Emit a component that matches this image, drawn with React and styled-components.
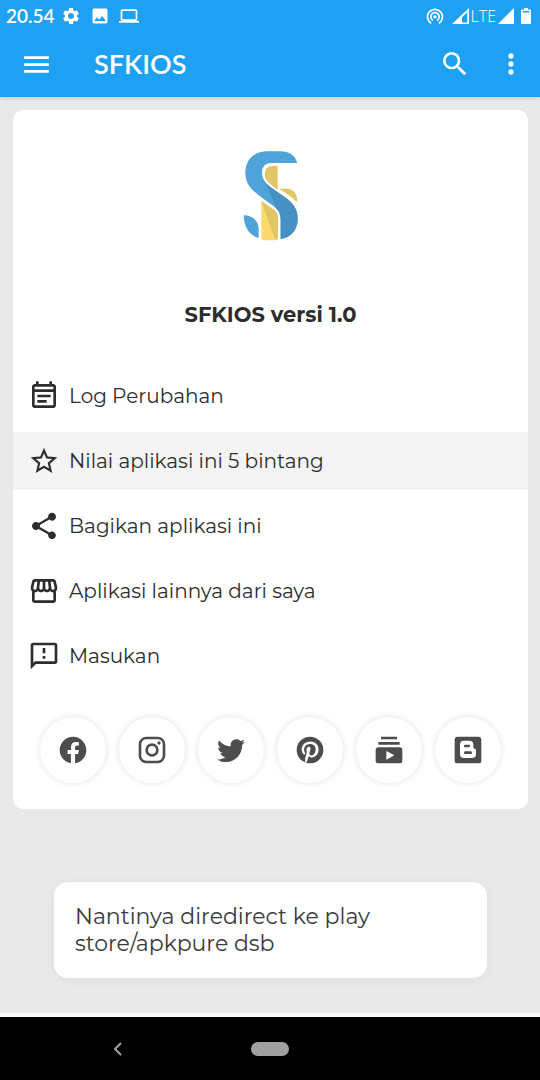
import React from "react";
import styled, { createGlobalStyle } from "styled-components";
import {
  MdSettings,
  MdImage,
  MdLaptop,
  MdWifiTethering,
  MdMenu,
  MdSearch,
  MdMoreVert,
  MdOutlineEventNote,
  MdStarBorder,
  MdShare,
  MdOutlineStorefront,
} from "react-icons/md";

const GlobalStyle = createGlobalStyle`
  * { box-sizing: border-box; }
  body {
    margin: 0;
    background: #e9e9e9;
    color: #2d2d2d;
    font-family: Montserrat, Inter, "Open Sans", sans-serif;
  }
  button { font: inherit; color: inherit; }
`;

const Screen = styled.div`
  display: flex;
  flex-direction: column;
  min-height: 100vh;
`;

const Header = styled.header`
  background: #1fa1f3;
  color: #fff;
  box-shadow: 0 1px 4px rgba(0, 0, 0, 0.16);
`;

const StatusBar = styled.div`
  display: flex;
  align-items: center;
  justify-content: space-between;
  height: 32px;
  padding: 0 9px 0 6px;
`;

const StatusGroup = styled.div`
  display: flex;
  align-items: center;
  gap: ${(p) => p.$gap}px;
  svg { display: block; }
`;

const Clock = styled.time`
  font: 600 19px/24px Lato, sans-serif;
`;

const Network = styled.span`
  display: flex;
  align-items: center;
  gap: 2px;
  font: 300 16px/20px "Open Sans", sans-serif;
`;

const AppBar = styled.div`
  display: flex;
  align-items: center;
  height: 64px;
  margin-bottom: 1px;
  padding: 0 13px 0 20px;
`;

const BarButton = styled.button`
  display: flex;
  align-items: center;
  justify-content: center;
  width: ${(p) => p.$width}px;
  height: 40px;
  padding: 0;
  border: 0;
  background: none;
`;

const Title = styled.h1`
  flex: 1;
  margin: 0 0 0 41px;
  font: 600 27px/32px Lato, sans-serif;
`;

const Actions = styled.div`
  display: flex;
  gap: 24px;
`;

const Main = styled.main`
  flex: 1;
  display: flex;
  flex-direction: column;
  padding: 13px 12px 35px 13px;
  border-bottom: 4px solid #fafafa;
`;

const Card = styled.section`
  display: flex;
  flex-direction: column;
  padding: 41px 0 26px;
  border-radius: 10px;
  background: #fff;
`;

const Brand = styled.div`
  display: flex;
  flex-direction: column;
  align-items: center;
  gap: 60px;
`;

const Version = styled.h2`
  margin: 0;
  font-size: 21px;
  line-height: 28px;
  font-weight: 700;
`;

const Menu = styled.ul`
  display: flex;
  flex-direction: column;
  gap: 7px;
  margin: 38px 0 32px;
  padding: 0;
  list-style: none;
`;

const MenuButton = styled.button`
  display: flex;
  align-items: center;
  gap: 9px;
  width: 100%;
  height: 58px;
  padding: 0 15px;
  border: 0;
  background: ${(p) => (p.$active ? "#f4f4f4" : "none")};
  font-size: 20px;
  line-height: 28px;
  text-align: left;
`;

const Socials = styled.nav`
  display: flex;
  justify-content: space-between;
  padding: 0 27px;
`;

const SocialLink = styled.a`
  display: flex;
  align-items: center;
  justify-content: center;
  width: 66px;
  height: 66px;
  border-radius: 50%;
  color: #4d4d4d;
  background: #fff;
  box-shadow: 0 0 6px rgba(0, 0, 0, 0.12);
`;

const Toast = styled.div`
  margin: auto 41px 0;
  padding: 21px;
  border-radius: 14px;
  background: #fff;
  box-shadow: 0 2px 12px rgba(0, 0, 0, 0.05);
  color: #3a3a3a;
  font-size: 22px;
  line-height: 27px;
`;

const ToastText = styled.p`
  max-width: 330px;
  margin: 0;
`;

const SystemNav = styled.footer`
  display: grid;
  grid-template-columns: 1fr auto 1fr;
  align-items: center;
  height: 63px;
  background: #000;
  color: #a2a2a2;
`;

const BackButton = styled.button`
  display: flex;
  justify-self: center;
  margin-right: 16px;
  padding: 8px;
  border: 0;
  background: none;
`;

const HomeButton = styled.button`
  width: 38px;
  height: 14px;
  padding: 0;
  border: 0;
  border-radius: 7px;
  background: #a0a0a0;
`;

const Glyph = ({ d, size = 32 }) => (
  <svg width={size} height={size} viewBox="0 0 24 24" fill="currentColor" aria-hidden="true">
    <path d={d} />
  </svg>
);

const FEEDBACK =
  "M13,10H11V6H13V10M13,12H11V14H13V12M22,4V16A2,2 0 0,1 20,18H6L2,22V4A2,2 0 0,1 4,2H20A2,2 0 0,1 22,4M20,4H4V17.2L5.2,16H20V4Z";

const SOCIALS = [
  {
    name: "Facebook",
    d: "M12 2.04C6.5 2.04 2 6.53 2 12.06C2 17.06 5.66 21.21 10.44 21.96V14.96H7.9V12.06H10.44V9.85C10.44 7.34 11.93 5.96 14.22 5.96C15.31 5.96 16.45 6.15 16.45 6.15V8.62H15.19C13.95 8.62 13.56 9.39 13.56 10.18V12.06H16.34L15.89 14.96H13.56V21.96A10 10 0 0 0 22 12.06C22 6.53 17.5 2.04 12 2.04Z",
  },
  {
    name: "Instagram",
    d: "M7.8,2H16.2C19.4,2 22,4.6 22,7.8V16.2A5.8,5.8 0 0,1 16.2,22H7.8C4.6,22 2,19.4 2,16.2V7.8A5.8,5.8 0 0,1 7.8,2M7.6,4A3.6,3.6 0 0,0 4,7.6V16.4C4,18.39 5.61,20 7.6,20H16.4A3.6,3.6 0 0,0 20,16.4V7.6C20,5.61 18.39,4 16.4,4H7.6M17.25,5.5A1.25,1.25 0 0,1 18.5,6.75A1.25,1.25 0 0,1 17.25,8A1.25,1.25 0 0,1 16,6.75A1.25,1.25 0 0,1 17.25,5.5M12,7A5,5 0 0,1 17,12A5,5 0 0,1 12,17A5,5 0 0,1 7,12A5,5 0 0,1 12,7M12,9A3,3 0 0,0 9,12A3,3 0 0,0 12,15A3,3 0 0,0 15,12A3,3 0 0,0 12,9Z",
  },
  {
    name: "Twitter",
    d: "M22.46,6C21.69,6.35 20.86,6.58 20,6.69C20.88,6.16 21.56,5.32 21.88,4.31C21.05,4.81 20.13,5.16 19.16,5.36C18.37,4.5 17.26,4 16,4C13.65,4 11.73,5.92 11.73,8.29C11.73,8.63 11.77,8.96 11.84,9.27C8.28,9.09 5.11,7.38 3,4.79C2.63,5.42 2.42,6.16 2.42,6.94C2.42,8.43 3.17,9.75 4.33,10.5C3.62,10.5 2.96,10.3 2.38,10V10.03C2.38,12.11 3.86,13.85 5.82,14.24C5.46,14.34 5.08,14.39 4.69,14.39C4.42,14.39 4.15,14.36 3.89,14.31C4.43,16 6,17.26 7.89,17.29C6.43,18.45 4.58,19.13 2.56,19.13C2.22,19.13 1.88,19.11 1.54,19.07C3.44,20.29 5.7,21 8.12,21C16,21 20.33,14.46 20.33,8.79C20.33,8.6 20.33,8.42 20.32,8.23C21.16,7.63 21.88,6.87 22.46,6Z",
  },
  {
    name: "Pinterest",
    d: "M9.04,21.54C10,21.83 10.97,22 12,22A10,10 0 0,0 22,12A10,10 0 0,0 12,2A10,10 0 0,0 2,12C2,16.25 4.67,19.9 8.44,21.34C8.35,20.56 8.26,19.27 8.44,18.38L9.59,13.44C9.59,13.44 9.3,12.86 9.3,11.94C9.3,10.56 10.16,9.53 11.14,9.53C12,9.53 12.4,10.16 12.4,10.97C12.4,11.83 11.83,13.06 11.54,14.24C11.37,15.22 12.06,16.08 13.06,16.08C14.84,16.08 16.22,14.18 16.22,11.5C16.22,9.1 14.5,7.46 12.03,7.46C9.21,7.46 7.55,9.56 7.55,11.77C7.55,12.63 7.83,13.5 8.29,14.07C8.38,14.13 8.38,14.21 8.35,14.36L8.06,15.45C8.06,15.62 7.95,15.68 7.78,15.56C6.5,15 5.76,13.18 5.76,11.71C5.76,8.55 8,5.68 12.32,5.68C15.76,5.68 18.44,8.15 18.44,11.43C18.44,14.87 16.31,17.63 13.26,17.63C12.29,17.63 11.34,17.11 11,16.5L10.33,18.87C10.1,19.73 9.47,20.88 9.04,21.5V21.54Z",
  },
  {
    name: "YouTube",
    d: "M20,8H4V6H20V8M18,2H6V4H18V2M22,12V20A2,2 0 0,1 20,22H4A2,2 0 0,1 2,20V12A2,2 0 0,1 4,10H20A2,2 0 0,1 22,12M16,16L10,12.73V19.26L16,16Z",
  },
  {
    name: "Blogger",
    d: "M14,13H9.95A1,1 0 0,0 8.95,14A1,1 0 0,0 9.95,15H14A1,1 0 0,0 15,14A1,1 0 0,0 14,13M9.95,10H12.55A1,1 0 0,0 13.55,9A1,1 0 0,0 12.55,8H9.95A1,1 0 0,0 8.95,9A1,1 0 0,0 9.95,10M16,9V10A1,1 0 0,0 17,11A1,1 0 0,1 18,12V15A3,3 0 0,1 15,18H9A3,3 0 0,1 6,15V8A3,3 0 0,1 9,5H13A3,3 0 0,1 16,8M20,2H4C2.89,2 2,2.89 2,4V20A2,2 0 0,0 4,22H20A2,2 0 0,0 22,20V4C22,2.89 21.1,2 20,2Z",
  },
];

const MENU = [
  { label: "Log Perubahan", icon: <MdOutlineEventNote size={32} /> },
  { label: "Nilai aplikasi ini 5 bintang", icon: <MdStarBorder size={32} />, active: true },
  { label: "Bagikan aplikasi ini", icon: <MdShare size={32} /> },
  { label: "Aplikasi lainnya dari saya", icon: <MdOutlineStorefront size={32} /> },
  { label: "Masukan", icon: <Glyph d={FEEDBACK} /> },
];

const Logo = () => (
  <svg width="56" height="90" viewBox="99 62 168 270" role="img" aria-label="SFKIOS">
    <path fill="#e2c567" d="M165 140C163 115 172 106 190 106H203V178C180 162 168 152 165 140Z" />
    <path fill="#e2c567" d="M206 175H230C250 175 262 190 262 213H258C245 199 225 186 206 175Z" />
    <path fill="#fbd96c" d="M154 212L190 237C200 244 204 251 204 264V320Q204 330 194 330H164Q154 330 154 320Z" />
    <path fill="#e2c567" d="M154 212L190 237C200 244 204 251 204 264V320Q204 328 196 330Z" />
    <path
      fill="#4fa3d8"
      d="M262 98C255 75 238 63 212 63H172C130 63 106 90 106 128C106 165 130 183 160 205L190 227C208 241 212 253 212 270V326C240 322 263 302 263 266C263 235 250 220 225 201L185 173C165 158 156 145 156 125C156 108 168 98 185 98Z"
    />
    <path
      fill="#4690c3"
      d="M165 156L198 232C209 243 212 255 212 270V326C240 322 263 302 263 266C263 235 250 220 225 201L185 173C176 167 170 162 165 156Z"
    />
    <path fill="#4fa3d8" d="M101 255C126 255 146 270 146 296V323C118 316 102 290 101 255Z" />
  </svg>
);

const SignalPartial = () => (
  <svg width="17" height="16" viewBox="0 0 17 16" aria-hidden="true">
    <path fill="currentColor" fillRule="evenodd" d="M0 16L17 0V16ZM10 14.5H15.3V4.2L10 9.2Z" />
  </svg>
);

const SignalFull = () => (
  <svg width="16" height="16" viewBox="0 0 16 16" aria-hidden="true">
    <path fill="currentColor" d="M0 16L16 0V16Z" />
  </svg>
);

const Battery = () => (
  <svg width="10" height="16" viewBox="0 0 10 16" aria-hidden="true">
    <path
      fill="currentColor"
      fillRule="evenodd"
      d="M3 0H7V1.5H9Q10 1.5 10 2.5V15Q10 16 9 16H1Q0 16 0 15V2.5Q0 1.5 1 1.5H3ZM1.5 3V4.5H8.5V3Z"
    />
  </svg>
);

export default function App() {
  return (
    <Screen>
      <GlobalStyle />
      <Header>
        <StatusBar>
          <StatusGroup $gap={6}>
            <Clock>20.54</Clock>
            <StatusGroup $gap={9}>
              <MdSettings size={20} />
              <MdImage size={20} />
              <MdLaptop size={20} />
            </StatusGroup>
          </StatusGroup>
          <StatusGroup $gap={7}>
            <MdWifiTethering size={20} />
            <Network>
              <SignalPartial />
              LTE
              <SignalFull />
            </Network>
            <Battery />
          </StatusGroup>
        </StatusBar>
        <AppBar>
          <BarButton $width={33} aria-label="Menu">
            <MdMenu size={33} />
          </BarButton>
          <Title>SFKIOS</Title>
          <Actions>
            <BarButton $width={32} aria-label="Cari">
              <MdSearch size={32} />
            </BarButton>
            <BarButton $width={32} aria-label="Opsi lainnya">
              <MdMoreVert size={32} />
            </BarButton>
          </Actions>
        </AppBar>
      </Header>

      <Main>
        <Card>
          <Brand>
            <Logo />
            <Version>SFKIOS versi 1.0</Version>
          </Brand>
          <Menu>
            {MENU.map((m) => (
              <li key={m.label}>
                <MenuButton $active={m.active}>
                  {m.icon}
                  {m.label}
                </MenuButton>
              </li>
            ))}
          </Menu>
          <Socials aria-label="Media sosial">
            {SOCIALS.map((s) => (
              <SocialLink key={s.name} href="#" aria-label={s.name}>
                <Glyph d={s.d} />
              </SocialLink>
            ))}
          </Socials>
        </Card>
        <Toast role="status">
          <ToastText>Nantinya diredirect ke play store/apkpure dsb</ToastText>
        </Toast>
      </Main>

      <SystemNav>
        <BackButton aria-label="Kembali">
          <svg width="8" height="14" viewBox="0 0 8 14" fill="none" stroke="currentColor" strokeWidth="2">
            <path d="M7 1L1 7L7 13" />
          </svg>
        </BackButton>
        <HomeButton aria-label="Beranda" />
      </SystemNav>
    </Screen>
  );
}
